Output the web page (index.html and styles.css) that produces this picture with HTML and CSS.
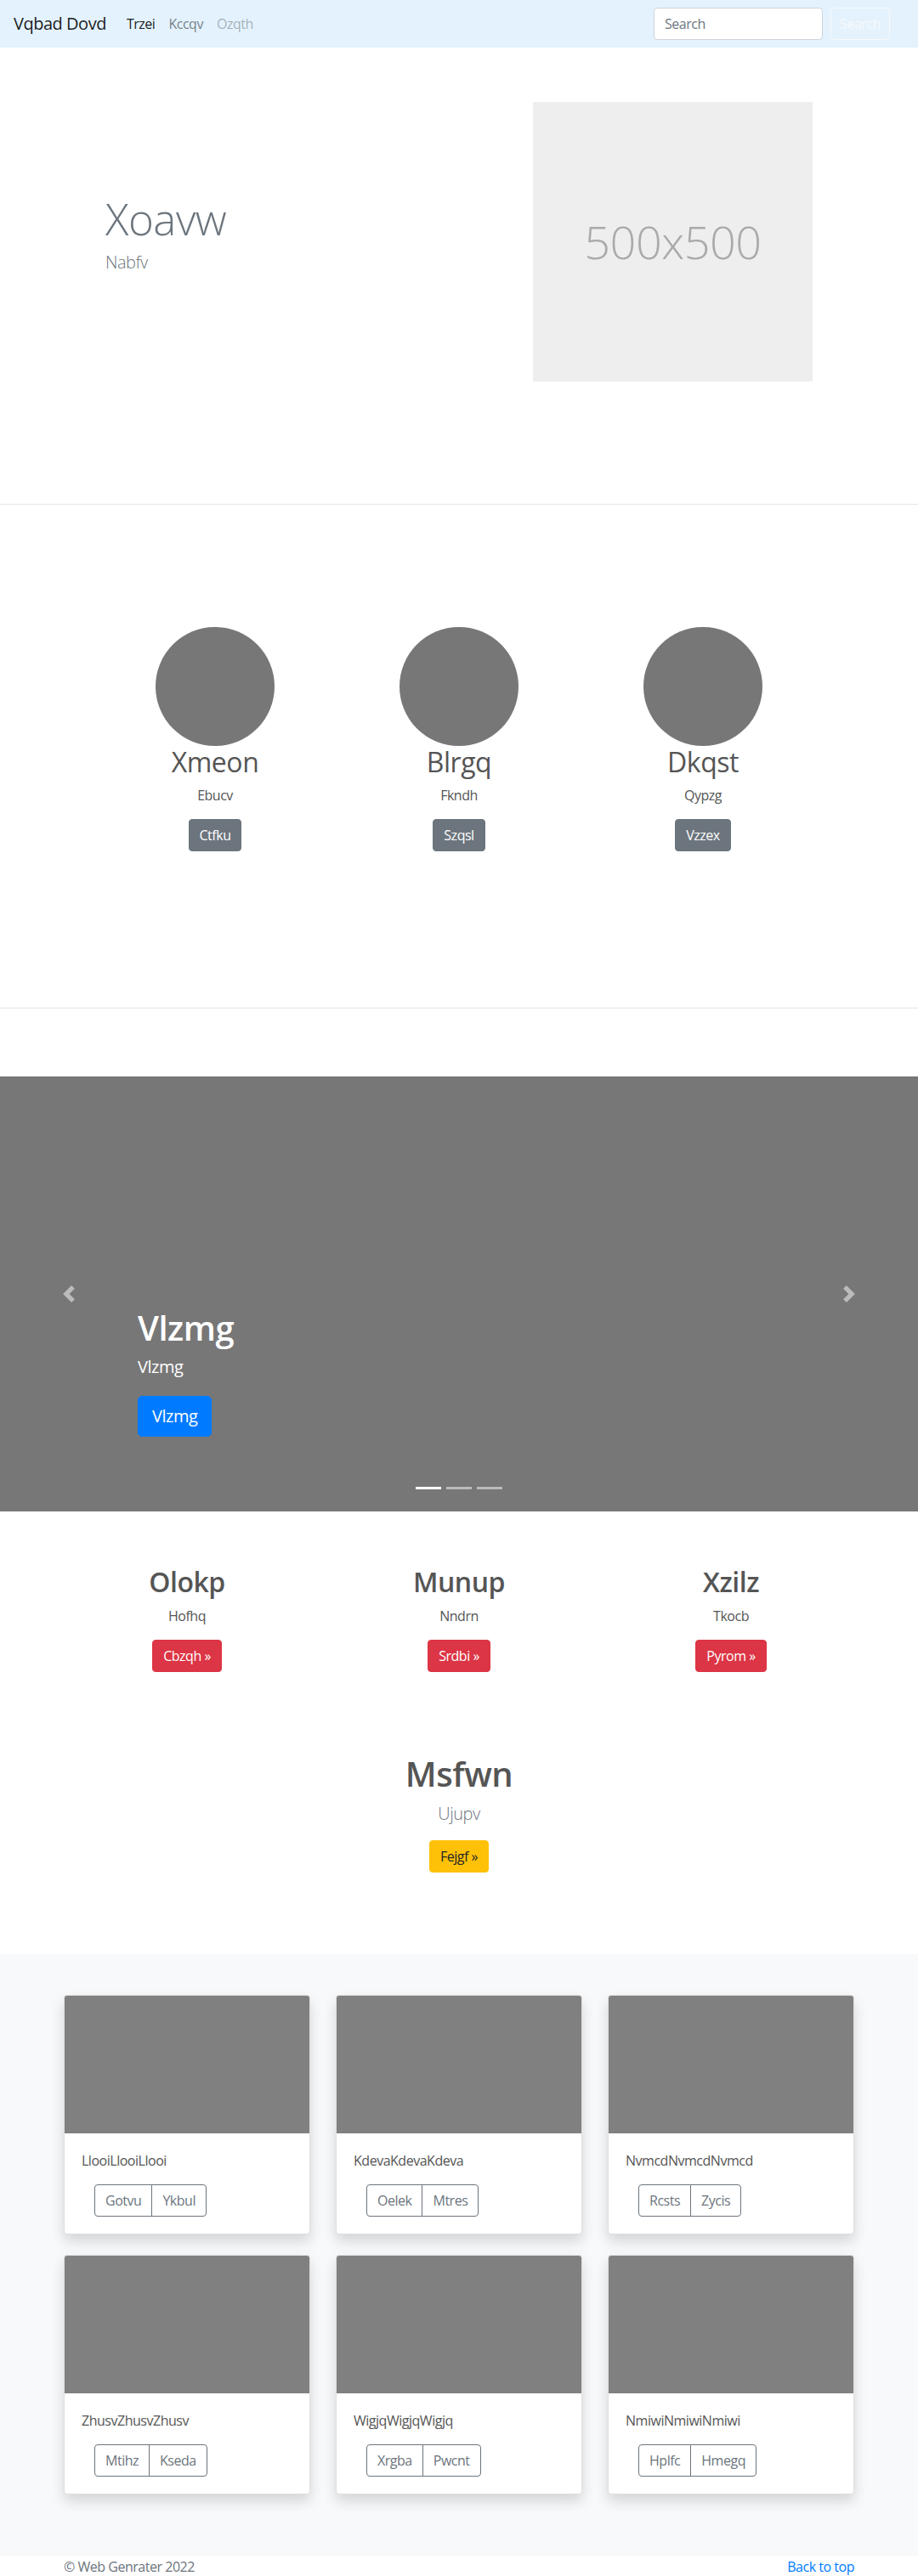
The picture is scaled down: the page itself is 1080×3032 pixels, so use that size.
FILE: index.html
```html
<!DOCTYPE html>
<html lang="en">
<head>
<meta charset="utf-8">
<title>Vqbad Dovd</title>
<link rel="stylesheet" href="styles.css">
</head>
<body>
<nav class="navbar">
  <a class="brand" href="#">Vqbad Dovd</a>
  <ul class="nav">
    <li><a class="nav-link active" href="#">Trzei</a></li>
    <li><a class="nav-link" href="#">Kccqv</a></li>
    <li><a class="nav-link disabled" href="#">Ozqth</a></li>
  </ul>
  <form class="search">
    <input class="search-input" type="text" placeholder="Search">
    <button class="btn btn-outline-light" type="button">Search</button>
  </form>
</nav>

<section class="hero">
  <div class="hero-row">
    <div class="hero-text">
      <h1 class="hero-title">Xoavw</h1>
      <p class="hero-lead">Nabfv</p>
    </div>
    <div class="placeholder">500x500</div>
  </div>
</section>

<section class="people">
  <div class="people-row">
    <div class="person">
      <div class="avatar"></div>
      <h2 class="person-name">Xmeon</h2>
      <p class="person-sub">Ebucv</p>
      <div class="btn-wrap"><a class="btn btn-secondary" href="#">Ctfku</a></div>
    </div>
    <div class="person">
      <div class="avatar"></div>
      <h2 class="person-name">Blrgq</h2>
      <p class="person-sub">Fkndh</p>
      <div class="btn-wrap"><a class="btn btn-secondary" href="#">Szqsl</a></div>
    </div>
    <div class="person">
      <div class="avatar"></div>
      <h2 class="person-name">Dkqst</h2>
      <p class="person-sub">Qypzg</p>
      <div class="btn-wrap"><a class="btn btn-secondary" href="#">Vzzex</a></div>
    </div>
  </div>
</section>

<div class="carousel">
  <ol class="indicators">
    <li class="ind active"></li>
    <li class="ind"></li>
    <li class="ind"></li>
  </ol>
  <div class="caption">
    <h1 class="caption-title">Vlzmg</h1>
    <p class="caption-text">Vlzmg</p>
    <div class="btn-wrap-left"><a class="btn btn-lg btn-primary" href="#">Vlzmg</a></div>
  </div>
  <a class="control control-prev" href="#">
    <svg class="control-icon" viewBox="0 0 8 8" width="20" height="20"><path fill="#fff" d="M5.25 0l-4 4 4 4 1.5-1.5L4.25 4l2.5-2.5L5.25 0z"/></svg>
  </a>
  <a class="control control-next" href="#">
    <svg class="control-icon" viewBox="0 0 8 8" width="20" height="20"><path fill="#fff" d="M2.75 0l-1.5 1.5L3.75 4l-2.5 2.5L2.75 8l4-4-4-4z"/></svg>
  </a>
</div>

<section class="features">
  <div class="feature">
    <h2 class="feature-title">Olokp</h2>
    <p class="feature-sub">Hofhq</p>
    <div class="btn-wrap"><a class="btn btn-danger" href="#">Cbzqh »</a></div>
  </div>
  <div class="feature">
    <h2 class="feature-title">Munup</h2>
    <p class="feature-sub">Nndrn</p>
    <div class="btn-wrap"><a class="btn btn-danger" href="#">Srdbi »</a></div>
  </div>
  <div class="feature">
    <h2 class="feature-title">Xzilz</h2>
    <p class="feature-sub">Tkocb</p>
    <div class="btn-wrap"><a class="btn btn-danger" href="#">Pyrom »</a></div>
  </div>
</section>

<section class="callout">
  <h1 class="callout-title">Msfwn</h1>
  <p class="callout-lead">Ujupv</p>
  <div class="btn-wrap"><a class="btn btn-warning" href="#">Fejgf »</a></div>
</section>

<section class="album">
  <div class="album-grid">
    <div class="card">
      <div class="card-img"></div>
      <div class="card-body">
        <p class="card-text">LlooiLlooiLlooi</p>
        <div class="btn-group"><a class="btn btn-outline" href="#">Gotvu</a><a class="btn btn-outline" href="#">Ykbul</a></div>
      </div>
    </div>
    <div class="card">
      <div class="card-img"></div>
      <div class="card-body">
        <p class="card-text">KdevaKdevaKdeva</p>
        <div class="btn-group"><a class="btn btn-outline" href="#">Oelek</a><a class="btn btn-outline" href="#">Mtres</a></div>
      </div>
    </div>
    <div class="card">
      <div class="card-img"></div>
      <div class="card-body">
        <p class="card-text">NvmcdNvmcdNvmcd</p>
        <div class="btn-group"><a class="btn btn-outline" href="#">Rcsts</a><a class="btn btn-outline" href="#">Zycis</a></div>
      </div>
    </div>
    <div class="card">
      <div class="card-img"></div>
      <div class="card-body">
        <p class="card-text">ZhusvZhusvZhusv</p>
        <div class="btn-group"><a class="btn btn-outline" href="#">Mtihz</a><a class="btn btn-outline" href="#">Kseda</a></div>
      </div>
    </div>
    <div class="card">
      <div class="card-img"></div>
      <div class="card-body">
        <p class="card-text">WigjqWigjqWigjq</p>
        <div class="btn-group"><a class="btn btn-outline" href="#">Xrgba</a><a class="btn btn-outline" href="#">Pwcnt</a></div>
      </div>
    </div>
    <div class="card">
      <div class="card-img"></div>
      <div class="card-body">
        <p class="card-text">NmiwiNmiwiNmiwi</p>
        <div class="btn-group"><a class="btn btn-outline" href="#">Hplfc</a><a class="btn btn-outline" href="#">Hmegq</a></div>
      </div>
    </div>
  </div>
</section>

<footer class="footer">
  <p class="footer-copy">© Web Genrater 2022</p>
  <a class="footer-top" href="#">Back to top</a>
</footer>
</body>
</html>
```

FILE: styles.css
```css
* { box-sizing: border-box; }

body {
  margin: 0;
  font-family: "Segoe UI", "Open Sans", "Noto Sans", sans-serif;
  font-size: 16px;
  line-height: 1.5;
  letter-spacing: -0.03em;
  color: #212529;
  background: #fff;
}

a { text-decoration: none; }

/* navbar */
.navbar {
  display: flex;
  align-items: center;
  height: 56px;
  padding: 8px 33px 8px 16px;
  background: #e3f2fd;
}
.brand {
  font-size: 20px;
  line-height: 30px;
  padding: 5px 0;
  margin-right: 16px;
  color: rgba(0, 0, 0, .9);
}
.nav {
  display: flex;
  list-style: none;
  margin: 0;
  padding: 0;
}
.nav-link {
  display: block;
  padding: 8px;
  color: rgba(0, 0, 0, .5);
}
.nav-link.active { color: rgba(0, 0, 0, .9); }
.nav-link.disabled { color: rgba(0, 0, 0, .3); }
.search {
  margin-left: auto;
  display: flex;
  align-items: center;
}
.search-input {
  width: 199px;
  height: 38px;
  padding: 6px 12px;
  margin-right: 9px;
  font: inherit;
  letter-spacing: inherit;
  color: #495057;
  background: #fff;
  border: 1px solid #ced4da;
  border-radius: 4px;
}
.search-input::placeholder { color: #6c757d; }

/* buttons */
.btn {
  display: inline-block;
  font-family: inherit;
  font-size: 16px;
  letter-spacing: inherit;
  line-height: 24px;
  padding: 6px 12px;
  border: 1px solid transparent;
  border-radius: 4px;
  background: transparent;
  cursor: pointer;
}
.btn-outline-light { color: #f8f9fa; border-color: #f8f9fa; width: 70px; padding: 6px 0; text-align: center; }
.btn-secondary { color: #fff; background: #6c757d; border-color: #6c757d; }
.btn-primary { color: #fff; background: #007bff; border-color: #007bff; }
.btn-danger { color: #fff; background: #dc3545; border-color: #dc3545; }
.btn-warning { color: #212529; background: #ffc107; border-color: #ffc107; }
.btn-lg { font-size: 20px; line-height: 30px; padding: 8px 16px; border-radius: 5px; }
.btn-wrap { display: flex; justify-content: center; margin-bottom: 16px; }
.btn-wrap-left { display: flex; margin-bottom: 20px; }

/* hero */
.hero {
  padding: 64px 0 144px 124px;
  border-bottom: 1px solid #e5e5e5;
}
.hero-row {
  display: flex;
  align-items: center;
}
.hero-text { width: 503px; }
.hero-title {
  margin: 0 0 8px;
  font-size: 51px;
  font-weight: 300;
  line-height: 1.1;
  color: #6c757d;
}
.hero-lead {
  margin: 0 0 16px;
  font-size: 20px;
  font-weight: 300;
  color: #6c757d;
}
.placeholder {
  width: 329px;
  height: 329px;
  background: #eee;
  color: #aaa;
  display: flex;
  align-items: center;
  justify-content: center;
  font-size: 54px;
  font-weight: 300;
}

/* people */
.people {
  padding: 144px 0;
  border-bottom: 1px solid #e5e5e5;
}
.people-row {
  display: flex;
  justify-content: center;
}
.person {
  width: 287px;
  text-align: center;
  margin-bottom: 24px;
}
.avatar {
  width: 140px;
  height: 140px;
  margin: 0 auto;
  border-radius: 50%;
  background: #777;
}
.person-name {
  margin: 0 0 8px;
  font-size: 32px;
  font-weight: 400;
  line-height: 1.2;
  color: #555;
}
.person-sub {
  margin: 0 0 16px;
  color: #555;
}

/* carousel */
.carousel {
  position: relative;
  height: 512px;
  margin: 80px 0 64px;
  background: #777;
}
.indicators {
  position: absolute;
  left: 0;
  right: 0;
  bottom: 0;
  margin: 0 0 16px;
  padding: 0;
  list-style: none;
  display: flex;
  justify-content: center;
}
.ind {
  width: 30px;
  height: 3px;
  margin: 10px 3px;
  background: rgba(255, 255, 255, .5);
}
.ind.active { background: #fff; }
.caption {
  position: absolute;
  left: 15%;
  right: 15%;
  bottom: 48px;
  padding: 20px 0;
  color: #fff;
}
.caption-title {
  margin: 0 0 8px;
  font-size: 40px;
  font-weight: 600;
  line-height: 1.2;
}
.caption-text {
  margin: 0 0 20px;
  font-size: 20px;
  font-weight: 500;
  line-height: 1.4;
}
.control {
  position: absolute;
  top: 0;
  bottom: 0;
  width: 15%;
  display: flex;
  align-items: center;
  justify-content: center;
  opacity: .5;
}
.control-prev { left: 0; }
.control-next { right: 0; }
.control-icon { display: block; }

/* features */
.features {
  width: 960px;
  margin: 0 auto;
  display: flex;
}
.feature {
  width: 320px;
  text-align: center;
  margin-bottom: 24px;
}
.feature-title {
  margin: 0 0 8px;
  font-size: 32px;
  font-weight: 600;
  line-height: 1.2;
  color: #555;
}
.feature-sub {
  margin: 0 0 16px;
  color: #555;
}

/* callout */
.callout {
  margin-top: 56px;
  padding-bottom: 80px;
  text-align: center;
}
.callout-title {
  margin: 0 0 8px;
  font-size: 40px;
  font-weight: 600;
  line-height: 1.2;
  color: #555;
}
.callout-lead {
  margin: 0 0 16px;
  font-size: 20px;
  font-weight: 300;
  color: #6c757d;
}

/* album */
.album {
  background: #f8f9fa;
  padding: 48px 0;
}
.album-grid {
  width: 930px;
  margin: 0 auto;
  display: grid;
  grid-template-columns: repeat(3, 290px);
  column-gap: 30px;
}
.card {
  margin-bottom: 24px;
  background: #fff;
  border: 1px solid rgba(0, 0, 0, .125);
  border-radius: 4px;
  box-shadow: 0 8px 16px rgba(0, 0, 0, .15);
  overflow: hidden;
}
.card-img {
  height: 162px;
  background: #808080;
}
.card-body { padding: 20px; }
.card-text {
  margin: 0 0 16px;
  color: #555;
}
.btn-group {
  display: flex;
  margin-left: 15px;
}
.btn-outline {
  color: #6c757d;
  border-color: #6c757d;
}
.btn-group .btn-outline:first-child { border-radius: 4px 0 0 4px; }
.btn-group .btn-outline:last-child { border-radius: 0 4px 4px 0; margin-left: -1px; }

/* footer */
.footer {
  width: 930px;
  margin: 0 auto;
  padding-top: 1px;
  display: flex;
  justify-content: space-between;
}
.footer-copy {
  margin: 0;
  color: #6c757d;
}
.footer-top { color: #007bff; }
```
